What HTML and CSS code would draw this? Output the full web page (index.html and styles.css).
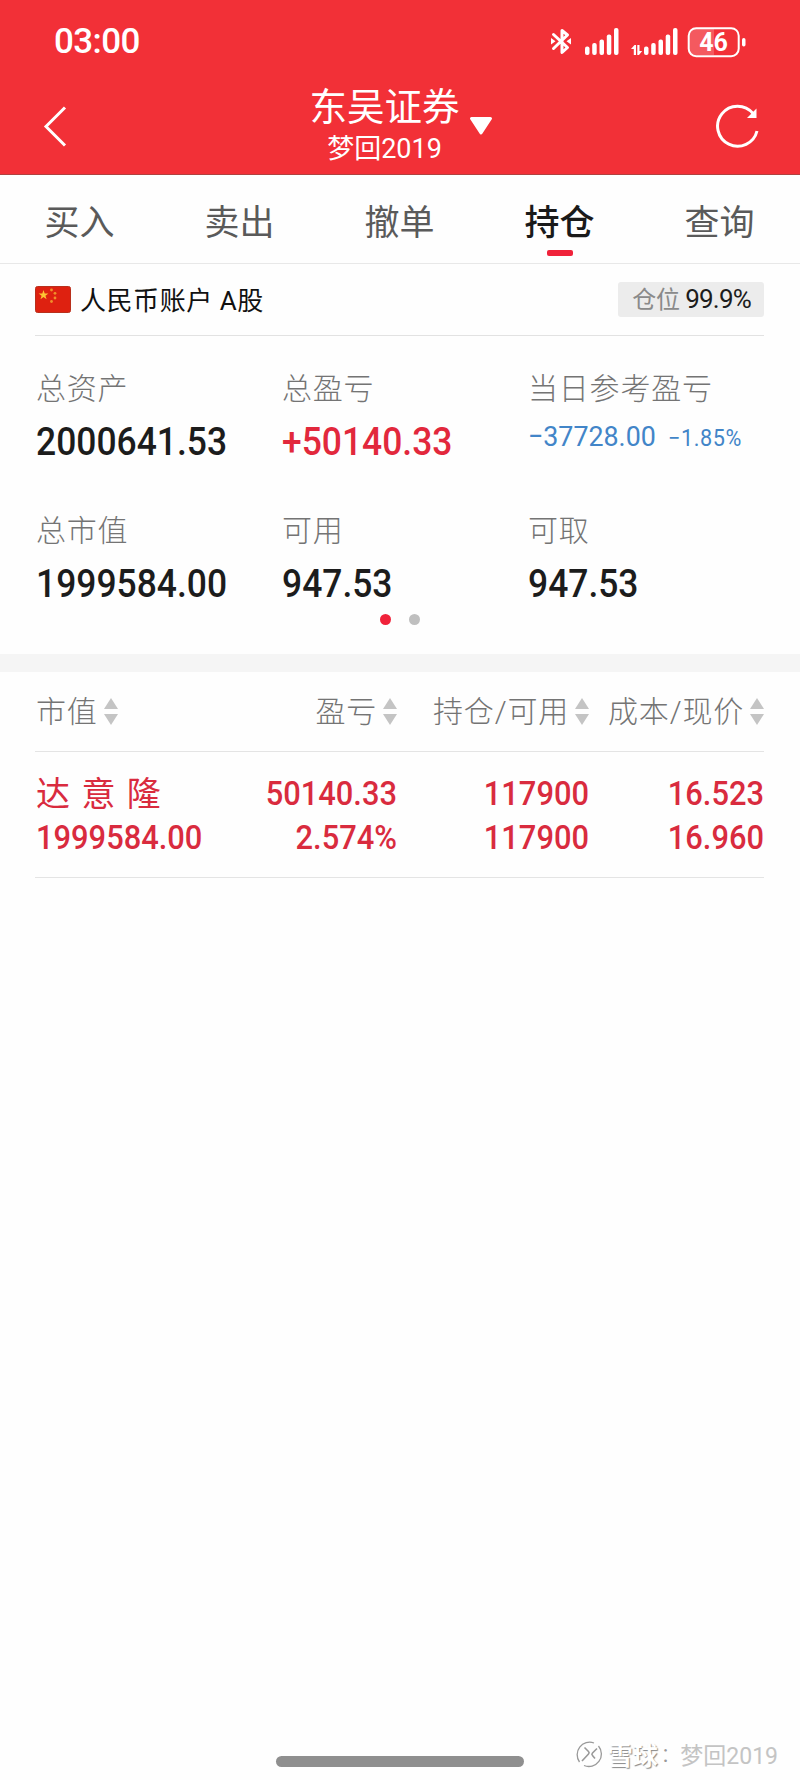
FILE: index.html
```html
<!DOCTYPE html>
<html lang="zh-CN">
<head>
    <meta charset="UTF-8">
    <meta name="viewport" content="width=device-width, initial-scale=1.0">
    <title>东吴证券 - 持仓</title>
    <link rel="stylesheet" href="styles.css">
</head>
<body>
    <header>
        <div class="status-bar">
            <span class="time">03:00</span>
            <svg class="status-icons" width="196" height="32" viewBox="0 0 196 32" fill="#fff">
                <!-- bluetooth -->
                <path d="M2.500 8.500 16.500 21.500 11 26.500V4.500l5.500 4.500L2.500 22.500" fill="none" stroke="#fff" stroke-width="3" stroke-linejoin="round" stroke-linecap="round"/>
                <path d="M0 12l4.500 3.300-4.500 3.300zM20 12l-4.500 3.300 4.500 3.300z"/>
                <!-- signal 1 -->
                <rect x="34" y="20.500" width="4.500" height="8.500" rx="2"/>
                <rect x="41.200" y="17" width="4.500" height="12" rx="2"/>
                <rect x="48.500" y="13.500" width="4.500" height="15.500" rx="2"/>
                <rect x="55.800" y="8.500" width="4.500" height="20.500" rx="2"/>
                <rect x="63" y="2" width="4.500" height="27" rx="2"/>
                <!-- signal 2 -->
                <path d="M80 23 83.500 19h1.500v10h-2.200v-6zM91.200 25 88 29h-1.700V19h2.200v6z"/>
                <rect x="93" y="20.500" width="4.500" height="8.500" rx="2"/>
                <rect x="100.200" y="17" width="4.500" height="12" rx="2"/>
                <rect x="107.500" y="13.500" width="4.500" height="15.500" rx="2"/>
                <rect x="114.700" y="8.500" width="4.500" height="20.500" rx="2"/>
                <rect x="122" y="2" width="4.500" height="27" rx="2"/>
                <!-- battery -->
                <path d="M144 3h19v26h-19a6 6 0 0 1-6-6V9a6 6 0 0 1 6-6z" fill-opacity=".2"/>
                <rect x="137.700" y="2.200" width="50" height="28" rx="7.500" fill="none" stroke="#fff" stroke-width="2"/>
                <rect x="191" y="12" width="3.500" height="8.500" rx="1.700"/>
                <text class="battery-text" x="162.500" y="25" text-anchor="middle">46</text>
            </svg>
        </div>
        <div class="title-bar">
            <svg class="back" width="26" height="44" viewBox="0 0 26 44">
                <path d="M22 3.500 3 22.500 22 41.500" fill="none" stroke="#fff" stroke-width="3"/>
            </svg>
            <div class="title">
                <div class="names">
                    <h1>东吴证券</h1>
                    <p>梦回2019</p>
                </div>
                <svg class="caret" width="24" height="20" viewBox="0 0 24 20">
                    <path d="M2.500 2.500h19L12 17z" fill="#fff" stroke="#fff" stroke-width="3" stroke-linejoin="round"/>
                </svg>
            </div>
            <svg class="refresh" width="44" height="44" viewBox="0 0 44 44">
                <path d="M41 27A20 20 0 1 1 37 9.500" fill="none" stroke="#fff" stroke-width="3"/>
                <path d="M31 14 40.500 14 40.500 4.500z" fill="#fff"/>
            </svg>
        </div>
    </header>

    <nav>
        <a>买入</a>
        <a>卖出</a>
        <a>撤单</a>
        <a class="active">持仓</a>
        <a>查询</a>
    </nav>

    <main>
        <section class="account">
            <svg class="flag" width="36" height="27" viewBox="0 0 36 27">
                <rect x=".5" y=".5" width="35" height="26" rx="2" fill="#de2110" stroke="#b8301c"/>
                <path d="M8.500 4l1.200 3.500h3.700l-3 2.200 1.200 3.500-3.100-2.200-3 2.200 1.100-3.500-3-2.200h3.700z" fill="#fdc533"/>
                <g fill="#f0902a">
                    <circle cx="16.500" cy="4" r="1.400"/>
                    <circle cx="20" cy="7.300" r="1.400"/>
                    <circle cx="20" cy="12" r="1.400"/>
                    <circle cx="16.500" cy="15.500" r="1.400"/>
                </g>
            </svg>
            <span class="account-name">人民币账户 A股</span>
            <span class="position">仓位 <b>99.9%</b></span>
        </section>

        <section class="summary">
            <div class="item">
                <h3>总资产</h3>
                <p>2000641.53</p>
            </div>
            <div class="item">
                <h3>总盈亏</h3>
                <p class="up">+50140.33</p>
            </div>
            <div class="item">
                <h3>当日参考盈亏</h3>
                <p class="down">−37728.00 <small>−1.85%</small></p>
            </div>
            <div class="item">
                <h3>总市值</h3>
                <p>1999584.00</p>
            </div>
            <div class="item">
                <h3>可用</h3>
                <p>947.53</p>
            </div>
            <div class="item">
                <h3>可取</h3>
                <p>947.53</p>
            </div>
        </section>
        <div class="dots"><i class="on"></i><i></i></div>

        <section class="holdings">
            <div class="row head">
                <span>市值<i class="sort"></i></span>
                <span>盈亏<i class="sort"></i></span>
                <span>持仓/可用<i class="sort"></i></span>
                <span>成本/现价<i class="sort"></i></span>
            </div>
            <div class="row stock">
                <div><p class="stock-name">达 意 隆</p><p>1999584.00</p></div>
                <div><p>50140.33</p><p>2.574%</p></div>
                <div><p>117900</p><p>117900</p></div>
                <div><p>16.523</p><p>16.960</p></div>
            </div>
        </section>
    </main>

    <footer>
        <div class="home-bar"></div>
        <div class="watermark">
            <svg width="28" height="28" viewBox="0 0 28 28" fill="none">
                <path d="M4.500 22A12.500 12.500 0 0 1 19 3M23.500 6A12.500 12.500 0 0 1 9 25.500" stroke="#999" stroke-width="1.300"/>
                <path d="M9.500 7.500l4 4c.800.800.800 1.700 0 2.500L7 21M22 8.500l-4.500 4.500c-.800.800-.800 1.700 0 2.500l2.500 3" stroke="#999" stroke-width="1.600"/>
            </svg>
            <b>雪球</b><span class="colon">:</span><span>梦回2019</span>
        </div>
    </footer>
</body>
</html>
```
FILE: styles.css
```css
* {
    box-sizing: border-box;
    margin: 0;
    padding: 0;
}
body {
    display: flex;
    flex-direction: column;
    height: 1780px;
    background-color: #fefefe;
    color: #1c1c1c;
    font-family: Roboto, "Noto Sans CJK SC", sans-serif;
}
h1, h3, b, i {
    font-weight: normal;
    font-style: normal;
}
svg {
    display: block;
}

/* header */
header {
    height: 175px;
    background-color: #f23037;
    border-bottom: 1px solid #b0413f;
    color: white;
}
.status-bar {
    display: flex;
    justify-content: space-between;
    align-items: center;
    height: 83px;
    padding: 0 53px 0 54px;
}
.time {
    font-size: 35px;
    font-weight: 500;
    letter-spacing: -0.6px;
}
.battery-text {
    font-size: 25px;
    font-weight: 700;
}
.title-bar {
    display: grid;
    grid-template-columns: 200px 1fr 200px;
    align-items: center;
    height: 85px;
}
.back {
    margin-left: 43px;
}
.title {
    display: flex;
    justify-content: center;
    align-items: center;
    gap: 9px;
    padding-left: 2px;
}
.names {
    text-align: center;
}
.names h1 {
    height: 46px;
    line-height: 46px;
    font-size: 37.5px;
}
.names p {
    height: 38px;
    line-height: 38px;
    font-size: 27px;
}
.refresh {
    justify-self: end;
    margin-right: 40px;
}

/* tabs */
nav {
    display: grid;
    grid-template-columns: repeat(5, 160px);
    height: 89px;
    border-bottom: 1px solid #e8e8e8;
}
nav a {
    display: flex;
    flex-direction: column;
    align-items: center;
    line-height: 50px;
    padding: 24px 1px 0 0;
    font-size: 35px;
    color: #5a5a5a;
}
nav .active {
    color: #1a1a1a;
    font-weight: 500;
}
nav .active::after {
    content: "";
    width: 26px;
    height: 6px;
    margin-top: 1px;
    border-radius: 2px;
    background-color: #f0223a;
}

/* account */
.account {
    display: flex;
    align-items: center;
    height: 72px;
    margin: 0 36px 0 35px;
    border-bottom: 1px solid #e2e2e2;
}
.account-name {
    margin: 0 0 3px 9px;
    font-size: 26px;
    letter-spacing: 0.55px;
    color: #111;
}
.position {
    height: 35px;
    margin-left: auto;
    padding: 0 13px 0 14px;
    border-radius: 3px;
    background-color: #ececec;
    line-height: 35px;
    font-size: 24px;
    letter-spacing: -0.3px;
    color: #8a8a8a;
}
.position b {
    font-size: 26px;
    letter-spacing: -0.8px;
    color: #1c1c1c;
}

/* asset summary */
.summary {
    display: grid;
    grid-template-columns: 246px 246px 1fr;
    grid-auto-rows: 142px;
    height: 275px;
    padding: 28px 0 0 36px;
}
.item h3 {
    height: 49px;
    line-height: 50px;
    font-size: 30px;
    letter-spacing: 0.8px;
    color: #747474;
    font-weight: 300;
}
.item p {
    height: 60px;
    line-height: 58px;
    font-size: 38.5px;
    font-weight: 500;
    transform: scaleX(0.92);
    transform-origin: left;
}
.item .up {
    color: #e2283c;
}
.item .down {
    line-height: 48px;
    font-size: 28.5px;
    font-weight: 400;
    transform: scaleX(0.94);
    color: #4285c8;
}
.down small {
    margin-left: 6px;
    font-size: 23px;
    letter-spacing: 0.6px;
}
.dots {
    display: flex;
    justify-content: center;
    gap: 18px;
    height: 43px;
    padding-top: 3px;
}
.dots i {
    width: 11px;
    height: 11px;
    border-radius: 50%;
    background-color: #bfbfbf;
}
.dots .on {
    background-color: #f0223a;
}

/* holdings table */
.holdings {
    padding: 0 36px 0 35px;
    border-top: 18px solid #f5f5f5;
}
.row {
    display: grid;
    grid-template-columns: 170px 192px 192px 175px;
    text-align: right;
    border-bottom: 1px solid #e4e4e4;
}
.row > :first-child {
    justify-self: start;
    padding-left: 1px;
    text-align: left;
}
.head {
    height: 80px;
    line-height: 76px;
    font-size: 30px;
    letter-spacing: 0.8px;
    color: #747474;
    font-weight: 300;
}
.head span {
    display: flex;
    justify-content: flex-end;
    align-items: center;
    white-space: nowrap;
}
.sort {
    display: grid;
    gap: 5px;
    margin-left: 6px;
}
.sort::before,
.sort::after {
    content: "";
    border: 7.5px solid transparent;
}
.sort::before {
    border-top: 0;
    border-bottom: 11px solid #c4c4c4;
}
.sort::after {
    border-bottom: 0;
    border-top: 11px solid #c4c4c4;
}
.stock {
    height: 126px;
    padding-top: 20px;
    color: #d92b3e;
}
.stock p {
    height: 43.5px;
    line-height: 44.5px;
    font-size: 33px;
    font-weight: 500;
    transform: scaleX(0.935);
    transform-origin: right;
}
.stock > :first-child p {
    transform-origin: left;
}
.stock .stock-name {
    font-size: 34px;
    font-weight: 400;
    word-spacing: 3px;
    transform: none;
}

/* bottom */
footer {
    position: relative;
    display: flex;
    justify-content: center;
    margin-top: auto;
    padding-bottom: 13px;
}
.home-bar {
    width: 248px;
    height: 11px;
    border-radius: 6px;
    background-color: #8f8f8f;
}
.watermark {
    position: absolute;
    right: 22px;
    bottom: 11px;
    display: flex;
    align-items: center;
    height: 30px;
    font-size: 23px;
    color: #c4c4c4;
}
.watermark b {
    margin-left: 5px;
    font-size: 25px;
    font-weight: 700;
    color: #fff;
    text-shadow: 1px 1px 1px #888;
}
.watermark .colon {
    margin: 0 12px 0 5px;
    color: #999;
}
```
